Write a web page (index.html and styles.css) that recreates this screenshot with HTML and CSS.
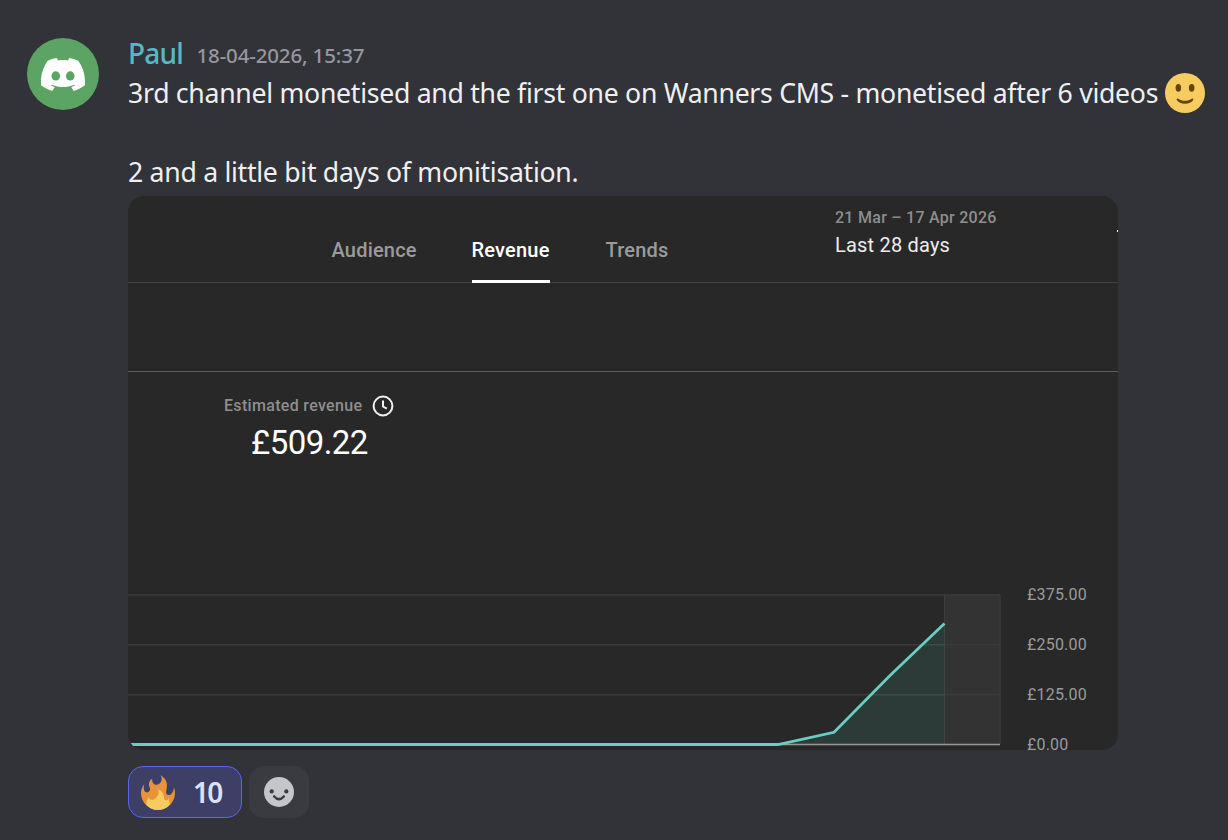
FILE: index.html
```html
<!DOCTYPE html>
<html lang="en">
<head>
<meta charset="utf-8">
<title>Message</title>
<link rel="stylesheet" href="styles.css">
</head>
<body>
<article class="message">
  <div class="avatar">
    <svg class="avatar-logo" viewBox="0 2.8 24 18.4" preserveAspectRatio="none" fill="#fff"><path d="M20.317 4.3698a19.7913 19.7913 0 00-4.8851-1.5152.0741.0741 0 00-.0785.0371c-.211.3753-.4447.8648-.6083 1.2495-1.8447-.2762-3.68-.2762-5.4868 0-.1636-.3933-.4058-.8742-.6177-1.2495a.077.077 0 00-.0785-.037 19.7363 19.7363 0 00-4.8852 1.515.0699.0699 0 00-.0321.0277C.5334 9.0458-.319 13.5799.0992 18.0578a.0824.0824 0 00.0312.0561c2.0528 1.5076 4.0413 2.4228 5.9929 3.0294a.0777.0777 0 00.0842-.0276c.4616-.6304.8731-1.2952 1.226-1.9942a.076.076 0 00-.0416-.1057c-.6528-.2476-1.2743-.5495-1.8722-.8923a.077.077 0 01-.0076-.1277c.1258-.0943.2517-.1923.3718-.2914a.0743.0743 0 01.0776-.0105c3.9278 1.7933 8.18 1.7933 12.0614 0a.0739.0739 0 01.0785.0095c.1202.099.246.1981.3728.2924a.077.077 0 01-.0066.1276 12.2986 12.2986 0 01-1.873.8914.0766.0766 0 00-.0407.1067c.3604.698.7719 1.3628 1.225 1.9932a.076.076 0 00.0842.0286c1.961-.6067 3.9495-1.5219 6.0023-3.0294a.077.077 0 00.0313-.0552c.5004-5.177-.8382-9.6739-3.5485-13.6604a.061.061 0 00-.0312-.0286z"/><ellipse cx="8.050" cy="12.800" rx="2.350" ry="2.550" fill="#5ba463"/><ellipse cx="15.950" cy="12.800" rx="2.350" ry="2.550" fill="#5ba463"/></svg>
  </div>
  <div class="body">
    <header class="byline"><span class="author">Paul</span><time class="stamp">18-04-2026, 15:37</time></header>
    <p class="line first"><span class="line-text">3rd channel monetised and the first one on Wanners CMS - monetised after 6 videos</span><svg class="smile" viewBox="0 0 36 36"><circle cx="18" cy="18" r="18" fill="#f6cc60"/><ellipse cx="12" cy="13.3" rx="2.5" ry="3.5" fill="#664500"/><ellipse cx="24" cy="13.3" rx="2.5" ry="3.5" fill="#664500"/><path fill="#664500" d="M10.700 23.200c.5-.5 1-.3 1.600.1 1.500.9 3.200 1.600 5.700 1.600s4.200-.7 5.700-1.600c.6-.4 1.100-.6 1.600-.1.400.4.200 1-.2 1.500C23.800 26.300 21.500 27.700 18 27.700s-5.800-1.400-7.100-3c-.4-.5-.6-1.100-.2-1.500z"/></svg></p>
    <p class="line second"><span class="line-text two">2 and a little bit days of monitisation.</span></p>
    <section class="shot">
      <div class="top">
        <nav class="tabs"><span class="tab t1">Audience</span><span class="tab active">Revenue</span><span class="tab t3">Trends</span></nav>
        <div class="period"><span class="range">21 Mar – 17 Apr 2026</span><span class="last">Last 28 days</span></div>
        <i class="speck"></i>
      </div>
      <div class="gap"></div>
      <div class="metric">
        <div class="metric-name"><span class="metric-label">Estimated revenue</span><svg class="clock" viewBox="0 0 22 22" fill="none" stroke="#f1f1f1" stroke-width="2"><circle cx="11" cy="11" r="9.400"/><path d="M11 5.500v6l3.800 2.200"/></svg></div>
        <div class="amount">£509.22</div>
      </div>
      <div class="chart">
        <svg class="plot" viewBox="0 0 880 165">
          <rect x="816.500" y="10" width="56" height="149" fill="#333"/>
          <path d="M0 10H872M0 59.700H872M0 109.700H872" stroke="#3b3b3b" stroke-width="1.600"/>
          <path d="M816.500 10V159M872 10V159" stroke="#3d3d3d"/>
          <path d="M3 159.500H872" stroke="#9b9b9b" stroke-width="1.600"/>
          <path d="M650 159L706 147.500 762 90 816.500 39V159Z" fill="#4db6ac" fill-opacity=".13"/>
          <path d="M2 159.500H650L706 147.300 762 90.500 816.500 38.500" fill="none" stroke="#68cdc2" stroke-width="2.800"/>
        </svg>
        <div class="axis"><span>£375.00</span><span>£250.00</span><span>£125.00</span><span>£0.00</span></div>
      </div>
    </section>
    <footer class="reactions">
      <div class="pill mine">
        <svg class="fire" viewBox="0 0 36 36"><path fill="#e8923a" d="M35 19c0-2.060-.370-4.040-1.040-5.870-.460 5.730-3.550 8.830-6.360 7.610-2.630-1.150-.860-5.590-.730-7.700C27.090 9.460 26.860 5.380 20.570 1c2.620 4.970.300 8.050-2.130 9.260-2.710 1.350-6.640-.130-6.290-5.540-2.970 1.610-3.910 5.620-2.620 8.340 1.340 2.840-.060 5.210-2.430 5.350-2.650.150-4.170-2.960-2.830-8.110C2.240 12.690 1 15.700 1 19c0 9.390 7.610 17 17 17s17-7.610 17-17z"/><path fill="#f6cc60" d="M28.400 23.490c.120 2.140-1.530 3.160-2.750 2.750-1.750-.590-1.280-1.840-1.870-4.420-.580-2.570-2-5.410-5.860-6.330 1.720 4.690-.540 7.300-2.720 8.920-2.230 1.660-2.310 1.420-3.490 1.400-2.240-.030-2.700-1.870-2.780-2.570-1.640 1.870-2.540 3.990-2.540 6.360 0 .430.040.870.100 1.300C9.620 34.050 13.570 36 18 36s8.380-1.950 11.500-5.100c.070-.430.110-.870.110-1.300 0-2.200-.440-4.320-1.210-6.110z"/></svg>
        <span class="count">10</span>
      </div>
      <div class="pill add">
        <svg class="face" viewBox="0 0 30 30"><circle cx="15" cy="15" r="15" fill="#c5c6ca"/><circle cx="7.700" cy="14.400" r="2.100" fill="#3a3b40"/><circle cx="22.300" cy="14.400" r="2.100" fill="#3a3b40"/><path d="M10.200 19.500Q15 24.800 19.800 19.500" fill="none" stroke="#3a3b40" stroke-width="2.600" stroke-linecap="round"/></svg>
      </div>
    </footer>
  </div>
</article>
</body>
</html>
```
FILE: styles.css
```css
* { box-sizing: border-box; }
body { margin: 0; background: #323338; font-family: "Noto Sans", sans-serif; overflow: hidden; }
.message { display: flex; gap: 29px; height: 840px; padding: 33px 0 0 27px; }
.avatar { flex: none; width: 72px; height: 72px; margin-top: 5px; border-radius: 50%; background: #5ba463; display: grid; place-items: center; }
.avatar-logo { width: 44px; height: 33px; }
.body { width: 1090px; white-space: nowrap; }
.byline { display: flex; align-items: flex-start; gap: 13.500px; height: 40px; line-height: 40px; }
.author { color: #56b9c6; font-size: 28px; font-weight: 500; letter-spacing: -.8px; }
.stamp { color: #96979e; font-size: 20.500px; font-weight: 500; letter-spacing: -.15px; line-height: 44px; }
.line { display: flex; align-items: flex-start; margin: 0; height: 40px; line-height: 40px; font-size: 28px; color: #efeff0; }
.first { line-height: 38px; }
.second { margin-top: 39px; height: 44px; line-height: 39px; }
/* condensed slightly to keep the narrow letterforms at full height */
.line-text { width: 1037px; flex: none; letter-spacing: -.3px; transform: scaleX(.951); transform-origin: 0 50%; }
.smile { width: 40px; height: 40px; flex: none; }
.shot { width: 990px; height: 554px; border-radius: 16px; background: #282828; overflow: hidden; font-family: Roboto, sans-serif; }
.top { display: flex; height: 87px; border-bottom: 1px solid #434343; }
.tabs { display: flex; width: 707px; padding-left: 203.500px; font-size: 20px; font-weight: 500; color: #9b9b9b; }
.tab { line-height: 108px; height: 87px; letter-spacing: .2px; }
.t1 { width: 140px; }
.active { width: 78px; color: #fff; border-bottom: 3px solid #fff; margin-right: 56px; }
.period { display: flex; flex-direction: column; width: 282px; }
.range { font-size: 16px; font-weight: 500; color: #8e8e8e; line-height: 20px; margin-top: 12px; letter-spacing: .27px; }
.last { font-size: 20px; line-height: 26px; margin-top: 4px; color: #ededed; letter-spacing: .2px; }
.speck { width: 1px; height: 2px; margin-top: 34px; background: #fff; }
.gap { height: 89px; border-bottom: 1px solid #5c5c5c; }
.metric { height: 213px; padding: 23px 0 0 96px; }
.metric-name { display: flex; gap: 9.500px; height: 22px; align-items: flex-start; }
.metric-label { font-size: 16px; font-weight: 500; color: #8e8e8e; letter-spacing: .32px; line-height: 20px; margin-top: 1px; }
.clock { width: 22px; height: 22px; }
.amount { font-size: 33px; line-height: 44px; margin: 4px 0 0 27px; color: #fff; letter-spacing: -.55px; }
.chart { display: flex; height: 165px; }
.plot { width: 880px; height: 165px; flex: none; }
.axis { padding-left: 19px; font-size: 16px; color: #9b9b9b; letter-spacing: .2px; }
.axis span { display: block; height: 50px; line-height: 20px; }
.axis span:last-child { height: 15px; }
.reactions { display: flex; gap: 7px; margin-top: 16px; }
.pill { display: flex; align-items: center; height: 52px; border-radius: 15px; }
.mine { width: 114px; padding-left: 11px; gap: 17px; background: #3e3f66; border: 1px solid #5865f2; }
.fire { width: 36px; height: 36px; }
.count { color: #dee0fc; font-size: 28px; font-weight: 600; letter-spacing: -1.800px; line-height: 40px; }
.add { width: 60px; justify-content: center; background: #3a3b40; }
.face { width: 30px; height: 30px; }
```
